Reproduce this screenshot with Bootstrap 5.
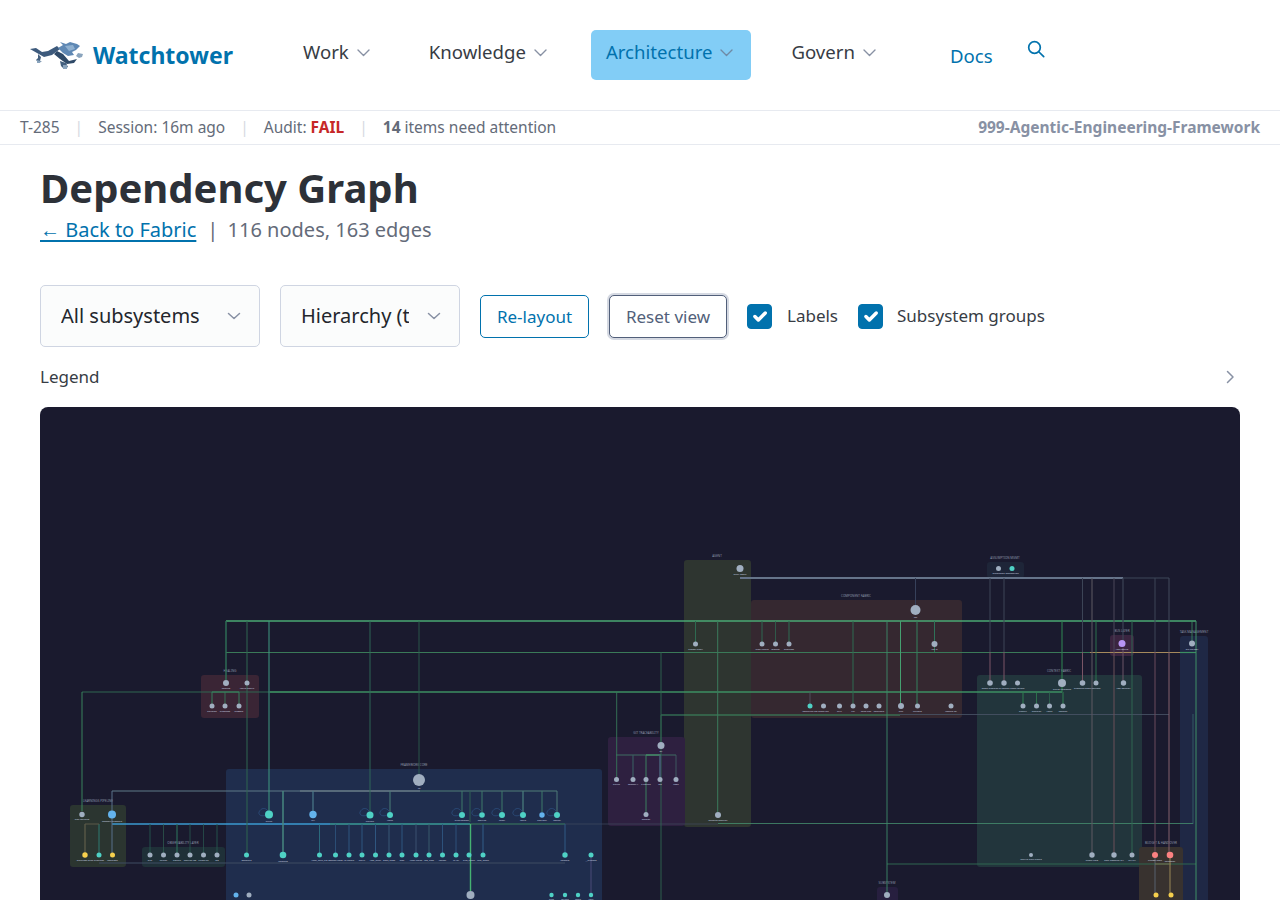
<!DOCTYPE html>
<html lang="en">
<head>
    <meta charset="UTF-8" />
    <meta name="viewport" content="width=device-width, initial-scale=1.0"/>
    <title>Dependency Graph - Watchtower</title>
    <link href="https://cdn.jsdelivr.net/npm/bootstrap@5.3.0/dist/css/bootstrap.min.css" rel="stylesheet">
    <style>
        body {
          font-family: "Noto Sans", sans-serif;
          font-size: 18px;
          color: #373c44;
          background: #fff;
        }
        .wt-header {
          height: 111px;
          padding: 30px 0 0 30px;
          border-bottom: 1px solid #e7eaf0;
          align-items: flex-start;
        }
        .wt-brand {
          color: #0172ad;
          font-size: 23px;
          font-weight: 700;
          text-decoration: none;
          width: 258px;
          height: 50px;
          gap: 8px;
        }
        .wt-brand svg { margin-top: 1px; }
        .wt-link {
          color: #373c44;
          font-size: 18.6px;
          height: 50px;
          padding: 0 18px 6px 15px;
          border-radius: 5px;
          text-decoration: none;
          gap: 8px;
        }
        .wt-link svg { margin-top: 1px; }
        .wt-link.wt-active { background: #82cdf6; color: #0172ad; }
        .wt-gap-a { margin-left: 26px; }
        .wt-gap-b { margin-left: 25px; }
        .wt-docs { color: #0172ad; font-size: 18.6px; text-decoration: none; margin: 12px 0 0 56px; }
        .wt-search { margin: 4px 0 0 34px; color: #0172ad; }
        .wt-status {
          height: 34px;
          padding: 0 20px;
          font-size: 15.5px;
          color: #646b79;
          border-bottom: 1px solid #e7eaf0;
        }
        .wt-sep { color: #d5d9e2; margin: 0 15px; }
        .wt-fail { color: #c62828; font-weight: 700; }
        .wt-project { color: #8891a4; font-weight: 700; }
        .wt-main { padding: 0 40px; }
        .wt-title {
          font-family: "Noto Sans", sans-serif;
          font-size: 40px;
          font-weight: 700;
          color: #2d3138;
          line-height: 54px;
          margin: 16px 0 0;
        }
        .wt-sub {
          font-size: 20px;
          color: #646b79;
          line-height: 30px;
        }
        .wt-sub a { color: #0172ad; text-underline-offset: 3px; }
        .wt-sub .wt-bar { margin: 0 4px 0 11px; }
        .wt-controls { margin-top: 40px; height: 62px; }
        .wt-select {
          height: 62px;
          font-size: 20px;
          color: #23262c;
          background-color: #fbfcfc;
          border: 1px solid #cfd5e2;
          border-radius: 5px;
          padding: 0 34px 0 20px;
          background-position: right 17px center;
          background-size: 16px 16px;
          background-image: url("data:image/svg+xml,%3csvg xmlns='http://www.w3.org/2000/svg' viewBox='0 0 16 16'%3e%3cpath fill='none' stroke='%238891a4' stroke-width='1.5' stroke-linecap='round' stroke-linejoin='round' d='M2.5 5.5 8 10.5l5.5-5'/%3e%3c/svg%3e");
        }
        .wt-select.wt-a { width: 220px; margin-right: 20px; }
        .wt-select.wt-b { width: 180px; margin-right: 20px; padding-right: 50px; }
        .wt-btn {
          font-size: 17px;
          height: 43px;
          padding: 0 10px;
          border-radius: 5px;
          background: #fff;
          line-height: 1;
        }
        .wt-btn-a { color: #0172ad; border: 1px solid #0172ad; width: 109px; margin-right: 20px; }
        .wt-btn-b { color: #525f7a; border: 1px solid #525f7a; width: 118px; margin-right: 20px; box-shadow: 0 0 0 2px #d5d9e2; }
        .wt-btn-a:hover { color: #0172ad; border-color: #0172ad; background: #fff; }
        .wt-btn-b:hover { color: #525f7a; border-color: #525f7a; background: #fff; }
        .wt-check { font-size: 17px; color: #373c44; gap: 14px; margin: 0 20px 0 0; padding: 0; min-height: 0; }
        .wt-check.wt-check-first { gap: 15px; }
        .wt-check .form-check-input {
          width: 25px;
          height: 25px;
          margin: 0;
          float: none;
          border-radius: 4px;
          background-color: #0172ad;
          border-color: #0172ad;
        }
        .wt-legend { font-size: 17px; height: 30px; margin-top: 15px; padding-right: 5px; color: #373c44; }
        .wt-graph {
          margin-top: 15px;
          height: 700px;
          background: #1a1a2e;
          border-radius: 8px;
          overflow: hidden;
        }
        .wt-graph svg { display: block; }
        .wt-graph text { font-family: "Noto Sans", sans-serif; text-anchor: middle; }
    </style>
</head>
<body>

<header class="d-flex wt-header">
    <a class="d-flex align-items-center wt-brand" href="#">
        <svg width="55" height="28" viewBox="0 0 55 28">
            <path fill="#3d5a7c" d="M0 7 6 6 12 10 18 9 27 4 30 7 22 13 14 15 7 11Z"/>
            <path fill="#5f88b4" d="M28 6 33 3 30 0 36 2 40 0 47 2 50 4 46 8 42 10 44 13 38 14 33 11Z"/>
            <path fill="#2f4a68" d="M27 9 33 12 39 19 47 17 44 21 37 22 30 17 24 12Z"/>
            <path fill="#8fb0d0" d="M35 4 43 3 45 7 39 9Z"/>
            <path fill="#44607f" d="M8 12 11 15 10 19 12 20 8 20 6 18 8 16ZM30 19 36 21 38 25 36 26 33 26 31 24Z"/>
            <path fill="#8aa4bd" d="M48 11 53 12 52 15 49 16 46 14ZM33 23 37 23 37 27 33 27ZM7 18 11 19 10 21 7 21Z"/>
        </svg>
        <span>Watchtower</span>
    </a>
    <nav class="d-flex align-items-start">
        <a class="d-flex align-items-center wt-link" href="#">Work
            <svg width="13" height="8" viewBox="0 0 13 8"><path fill="none" stroke="#8891a4" stroke-width="1.4" stroke-linecap="round" stroke-linejoin="round" d="M1 1l5.5 5.5L12 1"/></svg></a>
        <a class="d-flex align-items-center wt-link wt-gap-a" href="#">Knowledge
            <svg width="13" height="8" viewBox="0 0 13 8"><path fill="none" stroke="#8891a4" stroke-width="1.4" stroke-linecap="round" stroke-linejoin="round" d="M1 1l5.5 5.5L12 1"/></svg></a>
        <a class="d-flex align-items-center wt-link wt-active wt-gap-a" href="#">Architecture
            <svg width="13" height="8" viewBox="0 0 13 8"><path fill="none" stroke="#6f8aa6" stroke-width="1.4" stroke-linecap="round" stroke-linejoin="round" d="M1 1l5.5 5.5L12 1"/></svg></a>
        <a class="d-flex align-items-center wt-link wt-gap-b" href="#">Govern
            <svg width="13" height="8" viewBox="0 0 13 8"><path fill="none" stroke="#8891a4" stroke-width="1.4" stroke-linecap="round" stroke-linejoin="round" d="M1 1l5.5 5.5L12 1"/></svg></a>
        <a class="wt-docs" href="#">Docs</a>
        <span class="wt-search">
            <svg width="18" height="18" viewBox="0 0 18 18"><circle cx="7.5" cy="7.5" r="5.8" fill="none" stroke="#0172ad" stroke-width="1.7"/><path d="M12 12l4.7 4.7" stroke="#0172ad" stroke-width="1.7" stroke-linecap="round"/></svg>
        </span>
    </nav>
</header>

<div class="d-flex align-items-center justify-content-between wt-status">
    <div class="d-flex align-items-center">
        <span>T-285</span><span class="wt-sep">|</span>
        <span>Session: 16m ago</span><span class="wt-sep">|</span>
        <span>Audit:&nbsp;<span class="wt-fail">FAIL</span></span><span class="wt-sep">|</span>
        <span><strong>14</strong> items need attention</span>
    </div>
    <span class="wt-project">999-Agentic-Engineering-Framework</span>
</div>

<main class="wt-main">
    <h1 class="wt-title">Dependency Graph</h1>
    <div class="wt-sub"><a href="#">← Back to Fabric</a><span class="wt-bar">|</span> 116 nodes, 163 edges</div>

    <div class="d-flex align-items-center wt-controls">
        <select class="form-select wt-select wt-a"><option>All subsystems</option></select>
        <select class="form-select wt-select wt-b"><option>Hierarchy (top-down)</option></select>
        <button type="button" class="btn wt-btn wt-btn-a">Re-layout</button>
        <button type="button" class="btn wt-btn wt-btn-b">Reset view</button>
        <label class="form-check d-flex align-items-center wt-check wt-check-first">
            <input class="form-check-input" type="checkbox" checked> Labels
        </label>
        <label class="form-check d-flex align-items-center wt-check">
            <input class="form-check-input" type="checkbox" checked> Subsystem groups
        </label>
    </div>

    <div class="d-flex align-items-center justify-content-between wt-legend">
        <span>Legend</span>
        <svg width="9" height="14" viewBox="0 0 9 14"><path fill="none" stroke="#8891a4" stroke-width="1.5" stroke-linecap="round" stroke-linejoin="round" d="M1.5 1.5 7 7l-5.5 5.5"/></svg>
    </div>

    <div class="wt-graph">
        <svg id="graph" width="1200" height="700" viewBox="40 407 1200 700"></svg>
    </div>
</main>

<script>
    // everything below is in page pixels, the viewBox shifts it into the panel
    const groups = [
      [226, 769, 376, 260, '#1f2d4d', 'FRAMEWORK CORE', 414],
      [684, 560, 67, 267, '#2e3530', 'AGENT', 717],
      [751, 600, 211, 118, '#352830', 'COMPONENT FABRIC', 856],
      [608, 737, 77, 89, '#2e2040', 'GIT TRACEABILITY', 646],
      [201, 675, 58, 43, '#3a2535', 'HEALING', 230],
      [70, 805, 56, 62, '#2b3530', 'LEARNINGS PIPELINE', 98],
      [142, 847, 83, 20, '#1f3038', 'OBSERVABILITY LAYER', 183],
      [977, 675, 165, 192, '#22353c', 'CONTEXT FABRIC', 1059],
      [1110, 635, 24, 21, '#3a2540', 'BUS LAYER', 1122],
      [987, 562, 37, 16, '#1e2538', 'ASSUMPTION MGMT', 1005],
      [1180, 636, 28, 300, '#1f2845', 'TASK MANAGEMENT', 1194],
      [1139, 847, 44, 80, '#38322f', 'BUDGET & HANDOVER', 1161],
      [877, 887, 21, 40, '#271f3f', 'SUBSYSTEM', 887]
    ];

    const G = '#3c8f62', GB = '#4aa873', GD = '#2f6650', S = '#66748a', SD = '#4a5568', P = '#7a5566', BL = '#2f5680';

    // [x1, y1, x2, y2, colour, width]
    const edges = [
      [226, 621, 1196, 621, GB, 1.4], [226, 652.5, 1090, 652.5, '#3a7a58', 1.1], [1090, 652.5, 1180, 652.5, '#a58a5c', 1.2], [1180, 652.5, 1196, 652.5, G, 1.2],
      [82, 692, 330, 692, GD, 1], [270, 692, 1062, 692, G, 1.6], [661, 715, 900, 715, G, 1.1], [900, 714.5, 1169, 714.5, SD, .8],
      [740, 578, 1123, 578, S, 1.9], [1123, 578, 1169, 578, '#3c4658', 1],
      [112, 791, 300, 791, '#5f7a88', 1], [300, 791, 420, 791, '#8fa8a8', 1.2], [420, 791, 557, 791, '#517f78', 1.1],
      [112, 824, 330, 824, '#3b9ad0', 1.3], [330, 824, 470, 824, '#3a9a96', 1.3], [470, 824, 565, 824, '#3d8060', 1.1], [565, 824, 718, 824, '#3f4a60', .7], [718, 823.5, 1193, 823.5, '#458f6e', .8],
      [99, 863, 565, 863, '#3e4c62', 1], [887, 864, 1196, 864, GD, 1],
      [616, 755, 676, 755, '#3f6d62', 1], [646, 755, 661, 755, GB, 1], [212, 692, 239, 692, G, 1],
      [1193, 714, 1193, 824, '#3a6d70', .7], [661, 715, 661, 900, GD, .9],
      // up from the top rail
      [226, 621, 226, 680, '#2f7258', 1.4], [247, 621, 247, 855, GD, 1], [269, 621, 269, 812, '#3e9a82', 1], [370, 621, 370, 813, '#2f6d5a', .9], [419, 621, 419, 775, GD, .8],
      [661, 652, 661, 742, GD, .9], [717.7, 621, 717.7, 812, '#3c7a5c', 1], [887, 621, 887, 892, '#3c8a6a', .9], [853, 621, 853, 704, '#2e6a50', 1], [900.5, 621, 900.5, 704, '#45a070', 1], [917, 621, 917, 704, '#35805c', 1],
      [934.5, 621, 934.5, 652, '#2f7258', 1], [695.5, 621, 695.5, 642, '#2e6a50', 1], [762, 621, 762, 642, GD, 1], [775.5, 621, 775.5, 642, GD, .8], [789, 621, 789, 642, GD, 1.1], [915.5, 578, 915.5, 605, '#36405a', 1],
      [810, 692, 810, 704, '#556', .8], [1062, 621, 1062, 692, '#2f8050', 1.1], [1096, 621, 1096, 681, '#2e7a50', .9], [1132, 621, 1132, 855, '#2f6650', 1], [1192, 621, 1192, 641, G, .8], [1196, 621, 1196, 900, '#3e8f66', 1],
      // grey/pink drops from the 578 rail
      [990, 578, 990, 652, '#3c4456', 1], [990, 652, 990, 681, P, 1], [1004, 578, 1004, 652, '#3c4456', 1], [1004, 652, 1004, 681, P, 1],
      [1082.5, 578, 1082.5, 652, '#3c4456', 1], [1082.5, 652, 1082.5, 681, P, 1], [1092, 578, 1092, 855, '#5a5660', 1.1], [1114, 578, 1114, 652, '#4a4658', 1], [1114, 652, 1114, 855, '#6a5058', 1],
      [1123, 578, 1123, 641, '#3c4456', 1.2], [1123, 648, 1123, 681, '#6a5566', 1], [1155, 578, 1155, 652, '#3c4456', 1], [1155, 652, 1155, 853, '#6a4a5c', 1], [1169, 578, 1169, 652, '#424a5c', 1], [1169, 652, 1169, 853, '#84606c', 1],
      [1155, 857, 1155, 893, '#56606e', 1], [1170, 857, 1170, 893, '#8a7a50', 1.2], [1155, 864, 1171, 864, '#8a7a50', .8],
      // lower tree
      [82, 692, 82, 811, G, .9], [112, 791, 112, 853, '#59718a', 1], [85, 824, 85, 853, '#6a664e', 1], [99, 824, 99, 853, '#2f7a70', 1], [85, 824, 99, 824, '#5c5a48', 1],
      [150, 824, 150, 853, '#24584e', .9], [163.5, 824, 163.5, 853, '#2f6050', .7], [177, 824, 177, 853, '#2a6a58', 1.2], [190, 824, 190, 853, '#2a5a50', .8], [203.5, 824, 203.5, 853, '#2a5a50', .7], [217, 824, 217, 853, '#24584e', .9],
      [283, 791, 283, 853, '#47877f', 1.5], [313, 791, 313, 812, '#4b7a8a', 1.2], [390, 791, 390, 812, '#4a8078', 1],
      [462, 791, 462, 812, '#3f7a6a', 1], [482, 791, 482, 812, '#3f7a6a', 1], [502, 791, 502, 812, '#3f7a6a', 1], [523, 791, 523, 812, '#487a7a', 1.3], [542, 791, 542, 812, '#3f7a6a', 1], [557, 791, 557, 812, '#4f7a78', 1], [470, 791, 470, 822, '#2f6055', 1],
      [470.5, 824, 470.5, 891, '#45b272', 1.4], [483, 824, 483, 853, BL, 1.2], [565, 824, 565, 853, BL, 1.1], [591, 857, 591, 893, '#4a4a78', 1],
      [319.5, 824, 319.5, 853, '#2f7a8a', .8], [335.5, 824, 335.5, 853, BL, .8], [349, 824, 349, 853, BL, 1],
      [362, 824, 362, 853, BL, 1], [375.5, 824, 375.5, 853, BL, 1], [389, 824, 389, 853, '#3a5f7a', .9], [402, 824, 402, 853, BL, 1], [416, 824, 416, 853, '#3a5070', 1], [429, 824, 429, 853, '#3a6070', .9], [442.5, 824, 442.5, 853, BL, .9], [456, 824, 456, 853, BL, .9],
      [616.7, 692, 616.7, 777, '#357858', .9], [633, 755, 633, 777, '#3a5f62', 1.1], [646, 755, 646, 812, '#3c8a62', .9], [660, 755, 660, 777, '#48607a', 1.5], [676, 755, 676, 777, '#3f5f62', .9],
      [212, 692, 212, 704, '#35805c', 1], [225, 692, 225, 704, '#35805c', .8], [239, 692, 239, 704, '#35805c', 1],
      [1023, 692, 1023, 704, '#2f8050', 1], [1036.5, 692, 1036.5, 704, '#2f8050', .8], [1049.5, 692, 1049.5, 704, '#2f6a50', .7], [1063, 692, 1063, 704, '#2f8050', 1]
    ];

    const gr = '#a0aec0', te = '#4fd1c5', bl = '#63b3ed', ye = '#f6d04d', re = '#fc8181', vi = '#b794f4';

    // [x, y, r, colour, label]
    const nodes = [
      [226, 683, 3, gr, 'healing'], [247, 683, 2.5, gr, 'fabric-health'], [212, 706, 2.5, gr, 'patterns'], [225, 706, 2.5, gr, 'diagnose'], [239, 706, 2.5, gr, 'suggest'],
      [82, 814.5, 2.7, gr, 'add-learning'], [112, 814.5, 4, bl, 'memory-promote'], [85, 855, 2.7, ye, 'learnings-grad'], [99, 855, 2.5, te, 'practices'], [112.5, 855, 2.5, ye, 'decisions'],
      [150, 855, 2.5, gr, 'otel'], [163.5, 855, 2.5, gr, 'sprawl'], [177, 855, 2.5, gr, 'signals'], [190, 855, 2.5, gr, 'metrics-log'], [203.5, 855, 2.5, gr, 'traces-db'], [217, 855, 2.5, gr, 'log'],
      [419, 780, 6, gr, 'fw'], [269, 814.5, 4, te, 'paths'], [313, 814.5, 3.7, bl, 'init'], [370, 815, 3.5, te, 'harvest'], [390, 815, 3, te, 'tasks'],
      [462, 815, 3, te, 'sync-commit'], [482, 815, 2.8, te, 'metrics'], [502, 815, 3, te, 'inject'], [523, 815, 3, te, 'route'], [542, 815, 2.7, bl, 'preflight'], [557, 815, 3, te, 'doctor'],
      [246.5, 855, 2.5, te, 'generate'], [283, 855, 3.3, te, 'upgrade'], [319.5, 855, 2.5, te, 'yaml_path_cfg'], [335.5, 855, 2.5, te, 'session-hook'], [349, 855, 2.5, te, 'lib-colors'],
      [362, 855, 2.5, te, 'notify'], [375.5, 855, 2.5, te, 'task_audit'], [389, 855, 2.5, te, 'gaps_page'], [402, 855, 2.5, te, 'json'], [416, 855, 2.5, te, 'yaml-dates'], [429, 855, 2.5, te, 'reg_view'], [442.5, 855, 2.5, te, 'render'], [456, 855, 2.5, te, 'ts-list'], [469, 855, 2.5, te, 'proj_check'], [483, 855, 2.5, te, 'task_check'],
      [565, 855, 2.7, te, 'compile'], [591, 855, 2.5, te, '__pycache'],
      [236, 895, 2.5, bl, 'bin'], [249, 895, 2.5, gr, 'watchtower-ui'], [470.5, 895, 4, gr, 'app'], [551.5, 895, 2.2, te, 'blue'], [565, 895, 2.2, te, 'wizard'], [578, 895, 2.2, te, 'prefs'], [591, 895, 2.2, te, 'tour'],
      [661, 745.5, 3.5, gr, 'git'], [616.5, 779.5, 2.5, gr, 'status'], [633, 779.5, 2.5, gr, 'commit-f'], [646, 779.5, 2.5, gr, 'c-bound'], [660, 779.5, 2.5, gr, 'log'], [676, 779.5, 2.5, gr, 'hook'], [646, 814.5, 2.5, gr, 'register'],
      [740, 568.5, 3.5, gr, 'audit-agent'], [695.5, 644, 2.5, gr, 'budget-audit'], [718, 815, 3, gr, 'observe-monitor'],
      [915.5, 610, 5, gr, 'fab'], [762, 644, 2.5, gr, 'blast-radius'], [775.5, 644, 2.5, gr, 'register'], [789, 644, 2.5, gr, 'overview'], [934.5, 644, 3, gr, 'ver-g'],
      [810, 706, 2.5, te, 'bootstrap-cfg'], [823.5, 706, 2.5, gr, 'cross-link'], [839.5, 706, 2.5, gr, 'drift'], [853, 706, 2.5, gr, 'lint'], [866, 706, 2.5, gr, 'form-hub'], [879, 706, 2.5, gr, 'contracts'], [901, 706, 3, gr, 'hub'], [917.5, 706, 2.5, gr, 'validate'], [951, 706, 2.5, gr, 'update-rel'],
      [998.5, 568.5, 2.5, gr, 'hypothesis'], [1012, 568.5, 2.5, te, 'assumption'],
      [990, 683, 2.8, gr, 'check-dispatch'], [1004, 683, 2.7, gr, 'ts-tabbed'], [1017.5, 683, 2.5, gr, 'block-format'], [1062, 683, 4, gr, 'status-inference'], [1082.5, 683, 2.8, gr, 'pressure-check'], [1096, 683, 2.5, gr, 'tiebreak'], [1123.5, 683, 2.7, gr, 'tool-counter'],
      [1023, 706, 2.5, gr, 'classify'], [1036.5, 706, 2.5, gr, 'dispatch'], [1049.5, 706, 2.5, gr, 'tasks'], [1063, 706, 2.5, gr, 'session'],
      [1031, 855, 2, gr, 'finalize-path-create'], [1092, 855, 2.7, gr, 'check-tier0'], [1114, 855, 2.7, gr, 'post-compact-ctx'], [1132, 855, 2.5, gr, 'init-ctx'],
      [1122, 643.5, 3.5, vi, 'task-config'], [1192, 643.5, 3, gr, 'sys-dataset'],
      [1155, 855, 3, re, 'budget-mon'], [1170, 855, 3.3, re, 'handover'], [1156, 895, 2.5, ye, 'collect-mem'], [1171, 895, 2.5, ye, 'episodic-gen'],
      [887, 895, 3, gr, 'bootstrap']
    ];

    const loops = [269, 370, 390, 462, 482, 502, 523, 557];

    let svg = '';
    groups.forEach(g => {
      svg += `<rect x="${g[0]}" y="${g[1]}" width="${g[2]}" height="${g[3]}" rx="3" fill="${g[4]}"/>`;
      svg += `<text x="${g[6]}" y="${g[1] - 3}" font-size="3" fill="#8a93a6">${g[5].replace('&', '&amp;')}</text>`;
    });
    edges.forEach(e => {
      svg += `<line x1="${e[0]}" y1="${e[1]}" x2="${e[2]}" y2="${e[3]}" stroke="${e[4]}" stroke-width="${e[5]}"/>`;
    });
    loops.forEach(x => {
      const y = 814;
      svg += `<path d="M${x - 1} ${y - 3}C${x - 4} ${y - 7} ${x - 8} ${y - 6} ${x - 10} ${y - 2}C${x - 11} ${y + 1} ${x - 7} ${y + 3} ${x - 3} ${y + 1}" fill="none" stroke="#2c5282" stroke-width=".7"/>`;
    });
    nodes.forEach(n => {
      svg += `<circle cx="${n[0]}" cy="${n[1]}" r="${n[2]}" fill="${n[3]}"/>`;
      svg += `<text x="${n[0]}" y="${n[1] + n[2] + 3.2}" font-size="2.4" fill="#cbd5e0">${n[4]}</text>`;
    });
    document.getElementById('graph').innerHTML = svg;
</script>
<script src="https://cdn.jsdelivr.net/npm/bootstrap@5.3.0/dist/js/bootstrap.bundle.min.js"></script>
</body>
</html>
